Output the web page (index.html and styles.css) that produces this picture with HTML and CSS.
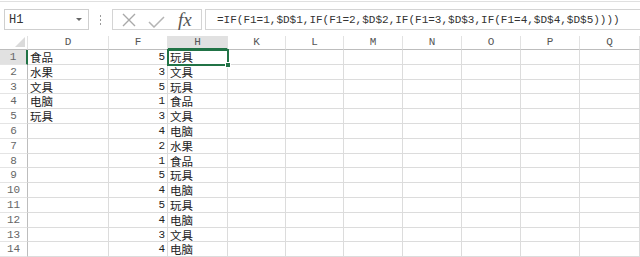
FILE: index.html
```html
<!DOCTYPE html>
<html lang="zh-CN">
<head>
    <meta charset="UTF-8">
    <title>Sheet1</title>
    <link rel="stylesheet" href="styles.css">
</head>
<body>
    <div class="ribbon-edge"></div>

    <div class="formula-row">
        <div class="name-box">
            <span>H1</span>
            <span class="drop-arrow"></span>
        </div>
        <div class="grip">
            <i></i><i></i><i></i>
        </div>
        <div class="fx-buttons">
            <svg class="btn-cancel" width="14" height="14" viewBox="0 0 14 14">
                <path d="M1 1 L13 13 M13 1 L1 13" stroke="#a9a9a9" stroke-width="1.4" fill="none"/>
            </svg>
            <svg class="btn-enter" width="17" height="12" viewBox="0 0 17 12">
                <path d="M1 6 L6 11 L16 1" stroke="#b4b4b4" stroke-width="1.5" fill="none"/>
            </svg>
            <span class="fx">fx</span>
        </div>
        <div class="formula-input">=IF(F1=1,$D$1,IF(F1=2,$D$2,IF(F1=3,$D$3,IF(F1=4,$D$4,$D$5))))</div>
    </div>

    <div class="sheet">
        <div class="row head">
            <div class="corner"><span class="corner-tri"></span></div>
            <div>D</div><div>F</div><div class="sel">H</div><div>K</div><div>L</div>
            <div>M</div><div>N</div><div>O</div><div>P</div><div>Q</div>
        </div>
        <div class="row">
            <div class="num sel">1</div><div class="txt">食品</div><div class="val">5</div><div class="txt active">玩具<span class="handle"></span></div>
            <div></div><div></div><div></div><div></div><div></div><div></div><div></div>
        </div>
        <div class="row">
            <div class="num">2</div><div class="txt">水果</div><div class="val">3</div><div class="txt">文具</div>
            <div></div><div></div><div></div><div></div><div></div><div></div><div></div>
        </div>
        <div class="row">
            <div class="num">3</div><div class="txt">文具</div><div class="val">5</div><div class="txt">玩具</div>
            <div></div><div></div><div></div><div></div><div></div><div></div><div></div>
        </div>
        <div class="row">
            <div class="num">4</div><div class="txt">电脑</div><div class="val">1</div><div class="txt">食品</div>
            <div></div><div></div><div></div><div></div><div></div><div></div><div></div>
        </div>
        <div class="row">
            <div class="num">5</div><div class="txt">玩具</div><div class="val">3</div><div class="txt">文具</div>
            <div></div><div></div><div></div><div></div><div></div><div></div><div></div>
        </div>
        <div class="row">
            <div class="num">6</div><div class="txt"></div><div class="val">4</div><div class="txt">电脑</div>
            <div></div><div></div><div></div><div></div><div></div><div></div><div></div>
        </div>
        <div class="row">
            <div class="num">7</div><div class="txt"></div><div class="val">2</div><div class="txt">水果</div>
            <div></div><div></div><div></div><div></div><div></div><div></div><div></div>
        </div>
        <div class="row">
            <div class="num">8</div><div class="txt"></div><div class="val">1</div><div class="txt">食品</div>
            <div></div><div></div><div></div><div></div><div></div><div></div><div></div>
        </div>
        <div class="row">
            <div class="num">9</div><div class="txt"></div><div class="val">5</div><div class="txt">玩具</div>
            <div></div><div></div><div></div><div></div><div></div><div></div><div></div>
        </div>
        <div class="row">
            <div class="num">10</div><div class="txt"></div><div class="val">4</div><div class="txt">电脑</div>
            <div></div><div></div><div></div><div></div><div></div><div></div><div></div>
        </div>
        <div class="row">
            <div class="num">11</div><div class="txt"></div><div class="val">5</div><div class="txt">玩具</div>
            <div></div><div></div><div></div><div></div><div></div><div></div><div></div>
        </div>
        <div class="row">
            <div class="num">12</div><div class="txt"></div><div class="val">4</div><div class="txt">电脑</div>
            <div></div><div></div><div></div><div></div><div></div><div></div><div></div>
        </div>
        <div class="row">
            <div class="num">13</div><div class="txt"></div><div class="val">3</div><div class="txt">文具</div>
            <div></div><div></div><div></div><div></div><div></div><div></div><div></div>
        </div>
        <div class="row">
            <div class="num">14</div><div class="txt"></div><div class="val">4</div><div class="txt">电脑</div>
            <div></div><div></div><div></div><div></div><div></div><div></div><div></div>
        </div>
    </div>
</body>
</html>
```

FILE: styles.css
```css
/* General Reset */
* {
    margin: 0;
    padding: 0;
    box-sizing: border-box;
}

body {
    width: 640px;
    height: 257px;
    overflow: hidden;
    background-color: white;
    color: #222;
    font-family: "Noto Sans CJK SC", "Noto Sans", sans-serif;
}

.ribbon-edge {
    height: 2px;
    border-bottom: 1px solid #e0e0e0;
}

/* Name box + formula bar */
.formula-row {
    display: flex;
    align-items: stretch;
    height: 21px;
    margin-top: 7px;
    padding-left: 4px;
}

.name-box {
    width: 85px;
    border: 1px solid #cfcfcf;
    display: flex;
    align-items: center;
    justify-content: space-between;
    padding: 0 6px 0 4px;
    font-family: "Liberation Mono", monospace;
    font-size: 12px;
    color: #333;
}

.drop-arrow {
    width: 0;
    height: 0;
    border-left: 3px solid transparent;
    border-right: 3px solid transparent;
    border-top: 3px solid #666;
}

.grip {
    width: 23px;
    display: flex;
    flex-direction: column;
    align-items: center;
    justify-content: center;
    gap: 2px;
}

.grip i {
    width: 1px;
    height: 2px;
    background-color: #9a9a9a;
}

.fx-buttons {
    width: 90px;
    border: 1px solid #d4d4d4;
    display: flex;
    align-items: center;
    padding-left: 9px;
}

.btn-cancel {
    margin-right: 12px;
}

.btn-enter {
    margin-top: 4px;
    margin-right: 13px;
}

.fx {
    font-family: "Liberation Serif", serif;
    font-style: italic;
    font-size: 19px;
    color: #555;
    line-height: 1;
}

.formula-input {
    flex: 1;
    margin-left: 3px;
    border: 1px solid #d4d4d4;
    border-right: none;
    padding-left: 11px;
    display: flex;
    align-items: center;
    font-family: "Liberation Mono", monospace;
    font-size: 11px;
    color: #333;
    white-space: nowrap;
}

/* Grid */
.sheet {
    margin-top: 6px;
}

.row {
    display: grid;
    grid-template-columns: 28px 81px 59px 60px 58px 58px 59px 59px 59px 59px 60px;
    height: 14.8px;
}

.row > div {
    border-right: 1px solid #dcdcdc;
    border-bottom: 1px solid #dcdcdc;
    font-size: 11.5px;
    line-height: 14px;
    white-space: nowrap;
    overflow: hidden;
}

.row.head {
    height: 14px;
}

.row.head > div {
    border-bottom: 1px solid #bdbdbd;
    border-right: 1px solid #e2e2e2;
    text-align: center;
    font-family: "Liberation Mono", monospace;
    font-size: 11px;
    line-height: 13px;
    color: #555;
}

.row.head > div.sel {
    background-color: #e1e1e1;
    border-bottom: 2px solid #217346;
}

.corner {
    position: relative;
}

.corner-tri {
    position: absolute;
    right: 2px;
    bottom: 2px;
    width: 0;
    height: 0;
    border-left: 10px solid transparent;
    border-bottom: 10px solid #dadada;
}

.row > .num {
    text-align: center;
    font-family: "Liberation Mono", monospace;
    font-size: 11px;
    color: #666;
    border-right-color: #bdbdbd;
    border-bottom-color: #e4e4e4;
}

.row > .num.sel {
    background-color: #e1e1e1;
    border-right: 2px solid #217346;
}

.row > .txt {
    padding-left: 2px;
}

.row > .val {
    text-align: right;
    padding-right: 2px;
    font-family: "Liberation Mono", monospace;
    font-size: 11px;
}

.row > .active {
    position: relative;
    overflow: visible;
    outline: 2px solid #217346;
    outline-offset: -1px;
}

.handle {
    position: absolute;
    right: -4px;
    bottom: -4px;
    width: 6px;
    height: 6px;
    background-color: #217346;
    border: 1px solid white;
}
```
